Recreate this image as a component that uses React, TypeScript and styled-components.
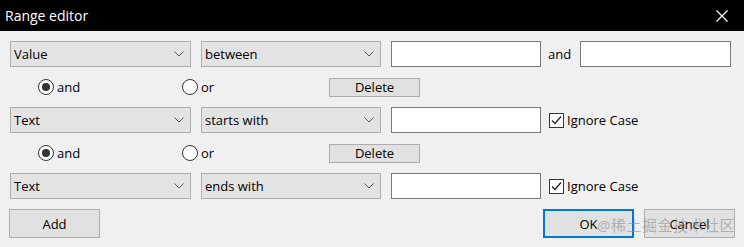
import React from 'react'
import styled, { createGlobalStyle } from 'styled-components'

const GlobalStyle = createGlobalStyle`
    html, body {
        margin: 0;
        padding: 0;
        background: #f0f0f0;
    }
    body {
        font-family: "Open Sans", "Noto Sans", "Noto Sans CJK SC", sans-serif;
        font-size: 13px;
        color: #000;
    }
`

/* window */
const Dialog = styled.div`
    position: relative;
    width: 744px;
    height: 247px;
    background: #f0f0f0;
    box-sizing: border-box;
    overflow: hidden;
`

const TitleBar = styled.div`
    height: 31px;
    background: #000;
    color: #fff;
    display: flex;
    align-items: center;
    justify-content: space-between;
    padding: 0 16px 0 5px;
    font-size: 14px;
`

const CloseIcon = styled.svg`
    width: 12px;
    height: 12px;
`

const Body = styled.div`
    padding: 10px 9px 0 10px;
    display: flex;
    flex-direction: column;
    gap: 10px;
`

/* rows */
const FilterRow = styled.div`
    display: flex;
    align-items: center;
    height: 26px;
`

const JoinRow = styled.div`
    display: flex;
    align-items: center;
    height: 20px;
    padding-left: 28px;
`

const ButtonRow = styled.div`
    display: flex;
    align-items: center;
    justify-content: space-between;
    height: 29px;
    margin-left: -1px;
`

/* controls */
const Combo = styled.div<{ width: number }>`
    width: ${({ width }) => width}px;
    height: 26px;
    box-sizing: border-box;
    background: #e3e3e3;
    border: 1px solid #adadad;
    display: flex;
    align-items: center;
    justify-content: space-between;
    padding: 0 6px 0 3px;
    margin-right: 10px;
    flex-shrink: 0;
`

const Chevron = styled.svg`
    width: 10px;
    height: 6px;
`

const TextBox = styled.div`
    width: 150px;
    height: 26px;
    box-sizing: border-box;
    background: #fff;
    border: 1px solid #7a7a7a;
    flex-shrink: 0;
`

const WideTextBox = styled(TextBox)`
    width: 151px;
`

const AndLabel = styled.span`
    margin: 0 9px 0 7px;
`

const CheckWrap = styled.label`
    display: flex;
    align-items: center;
    gap: 3px;
    margin-left: 8px;
`

const CheckBox = styled.span`
    width: 15px;
    height: 15px;
    box-sizing: border-box;
    border: 1px solid #333;
    background: #fff;
    display: flex;
    align-items: center;
    justify-content: center;
`

const RadioItem = styled.label<{ width: number }>`
    display: flex;
    align-items: center;
    gap: 3px;
    width: ${({ width }) => width}px;
    flex-shrink: 0;
`

const RadioCircle = styled.span<{ checked?: boolean }>`
    width: 16px;
    height: 16px;
    box-sizing: border-box;
    border-radius: 50%;
    border: 1px solid #333;
    background: #fff;
    display: flex;
    align-items: center;
    justify-content: center;

    &::after {
        content: '';
        width: 8px;
        height: 8px;
        border-radius: 50%;
        background: ${({ checked }) => checked ? '#333' : 'transparent'};
    }
`

const Button = styled.button<{ width?: number, height?: number, primary?: boolean }>`
    font: inherit;
    color: #000;
    width: ${({ width }) => width || 91}px;
    height: ${({ height }) => height || 29}px;
    box-sizing: border-box;
    background: #e1e1e1;
    border: ${({ primary }) => primary ? '2px solid #0078d7' : '1px solid #adadad'};
    padding: 0;
    display: flex;
    align-items: center;
    justify-content: center;
`

const RightButtons = styled.div`
    display: flex;
    gap: 10px;
`

const Watermark = styled.div`
    position: absolute;
    left: 597px;
    top: 214px;
    font-size: 15px;
    letter-spacing: 0.5px;
    color: rgba(140, 140, 140, 0.6);
    pointer-events: none;
    white-space: nowrap;
`

const ChevronDown = () => (
    <Chevron viewBox="0 0 10 6">
        <path d="M0.5 0.5 L5 5 L9.5 0.5" fill="none" stroke="#555" strokeWidth="1" />
    </Chevron>
)

const Check = () => (
    <CheckBox>
        <svg width="11" height="11" viewBox="0 0 11 11">
            <path d="M1 5.5 L4 8.5 L10 1.5" fill="none" stroke="#222" strokeWidth="1.3" />
        </svg>
    </CheckBox>
)

const Filter = ({ field, op, second }: { field: string, op: string, second?: boolean }) => (
    <FilterRow>
        <Combo width={181}>{field}<ChevronDown /></Combo>
        <Combo width={180}>{op}<ChevronDown /></Combo>
        <TextBox />
        {second ? (
            <>
                <AndLabel>and</AndLabel>
                <WideTextBox />
            </>
        ) : (
            <CheckWrap><Check />Ignore Case</CheckWrap>
        )}
    </FilterRow>
)

const Join = () => (
    <JoinRow>
        <RadioItem width={144}><RadioCircle checked />and</RadioItem>
        <RadioItem width={147}><RadioCircle />or</RadioItem>
        <Button width={91} height={19}>Delete</Button>
    </JoinRow>
)

export default function App() {
    return (
        <Dialog>
            <GlobalStyle />
            <TitleBar>
                <span>Range editor</span>
                <CloseIcon viewBox="0 0 12 12">
                    <path d="M0.5 0.5 L11.5 11.5 M11.5 0.5 L0.5 11.5" stroke="#fff" strokeWidth="1.2" />
                </CloseIcon>
            </TitleBar>
            <Body>
                <Filter field="Value" op="between" second />
                <Join />
                <Filter field="Text" op="starts with" />
                <Join />
                <Filter field="Text" op="ends with" />
                <ButtonRow>
                    <Button>Add</Button>
                    <RightButtons>
                        <Button primary>OK</Button>
                        <Button>Cancel</Button>
                    </RightButtons>
                </ButtonRow>
            </Body>
            <Watermark>@稀土掘金技术社区</Watermark>
        </Dialog>
    )
}
